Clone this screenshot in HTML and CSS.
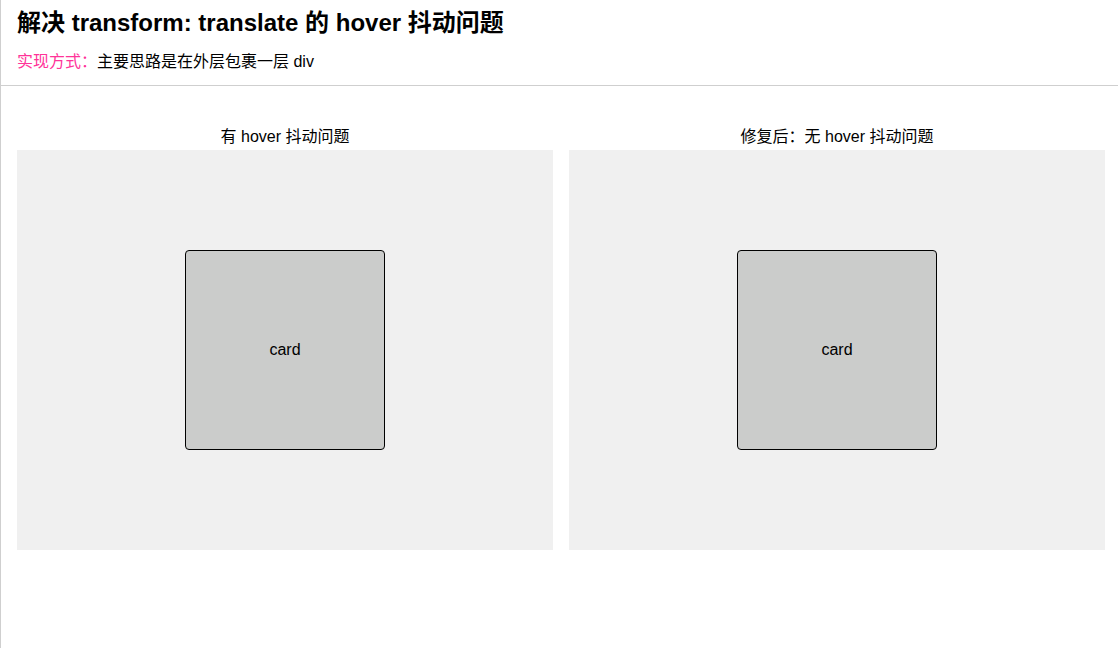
FILE: index.html
```html
<!DOCTYPE html>
<html lang="zh">
<head>
<meta charset="utf-8">
<title>hover 抖动</title>
<link rel="stylesheet" href="styles.css">
</head>
<body>
<div class="page">
  <header class="header">
    <h1 class="title">解决 transform: translate 的 hover 抖动问题</h1>
    <p class="desc"><span class="label">实现方式：</span>主要思路是在外层包裹一层 div</p>
  </header>
  <main class="demos">
    <section class="demo">
      <div class="caption">有 hover 抖动问题</div>
      <div class="stage">
        <div class="card">card</div>
      </div>
    </section>
    <section class="demo">
      <div class="caption">修复后：无 hover 抖动问题</div>
      <div class="stage">
        <div class="wrap"><div class="card">card</div></div>
      </div>
    </section>
  </main>
</div>
</body>
</html>
```

FILE: styles.css
```css
html, body {
  margin: 0;
  padding: 0;
  background: #fff;
}
body {
  font-family: "Liberation Sans", Arial, "Noto Sans CJK SC", sans-serif;
  color: #000;
}
.page {
  min-height: 648px;
  border-left: 1px solid #cfcfcf;
  box-sizing: border-box;
}
.header {
  padding: 9px 16px 12px 16px;
  border-bottom: 1px solid #cfcfcf;
}
.title {
  margin: 0;
  font-size: 24px;
  line-height: 28px;
  font-weight: bold;
}
.desc {
  margin: 14px 0 0 0;
  font-size: 16px;
  line-height: 22px;
}
.label {
  color: #ff3399;
}
.demos {
  display: flex;
  gap: 16px;
  padding: 40px 13px 0 16px;
}
.demo {
  flex: 0 0 536px;
  display: flex;
  flex-direction: column;
}
.caption {
  text-align: center;
  font-size: 16px;
  line-height: 22px;
  margin-bottom: 2px;
}
.stage {
  height: 400px;
  background: #f0f0f0;
  display: flex;
  align-items: center;
  justify-content: center;
}
.card {
  width: 200px;
  height: 200px;
  box-sizing: border-box;
  border: 1px solid #000;
  border-radius: 4px;
  background: #cbcccb;
  display: flex;
  align-items: center;
  justify-content: center;
  font-size: 16px;
}
.wrap {
  display: flex;
}
```
